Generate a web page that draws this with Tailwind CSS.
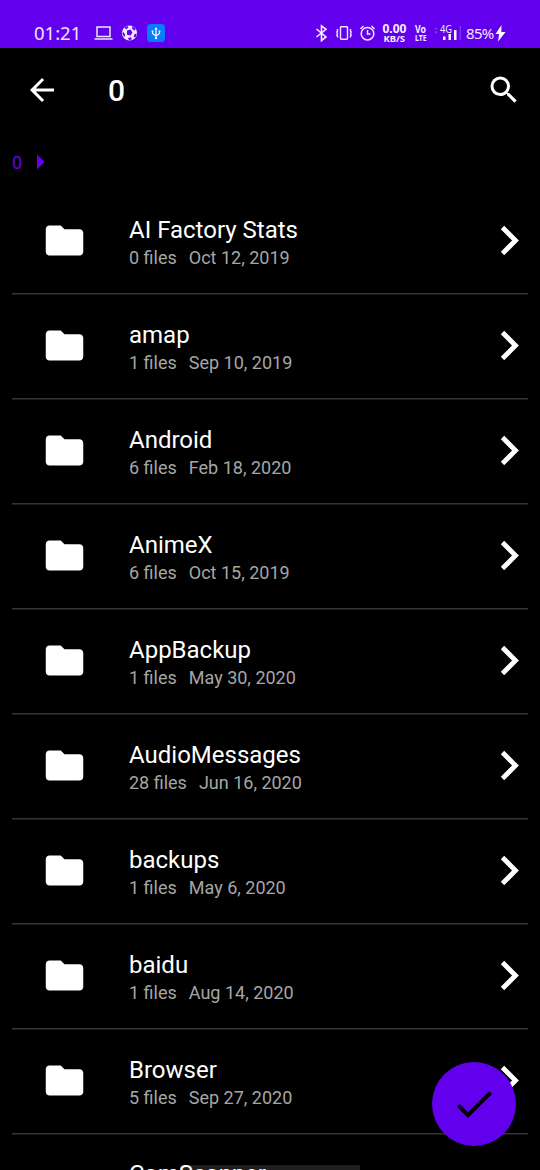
<!DOCTYPE html>
<html lang="en">
<head>
<meta charset="utf-8">
<title>Folder picker</title>
<script src="https://cdn.jsdelivr.net/npm/@tailwindcss/browser@4"></script>
</head>
<body class="bg-black">
<div class="relative flex h-[1170px] w-[540px] flex-col overflow-hidden bg-black font-['Roboto',sans-serif] text-white">
  <header class="flex h-12 shrink-0 items-start bg-[#6200ee] pt-[21px]">
    <div class="ml-[34px] w-[60px] font-['Noto_Sans',sans-serif] text-[18.500px] leading-6 text-white/90 whitespace-nowrap">01:21</div>
    <svg class="h-6 w-[19px]" viewBox="0 0 19 24" fill="none" stroke="#f0e6ff" stroke-width="1.5"><path d="M3 6h13v9.500H3zM.5 18h18"/></svg>
    <svg class="ml-2 h-6 w-[17px]" viewBox="0 0 17 24"><circle cx="8.500" cy="12" r="7.600" fill="#f4edff"/><path fill="#6200ee" d="M6 9.500l3.500-1 2 3-2 3-3.500-.800zM3.500 6.500l3-1.500 1 1.500-2.500 2zM11 5l3.500 2.700-.7 2-2.500-1.600zM1.200 12l1.600-.7 1.500 3-1.200 1.600zM7 17l3-.7 1 2-3 .9zM13.200 13.500l2.500-1.300-.8 3.500-2.200.700z"/></svg>
    <svg class="ml-[9px] h-6 w-[18px]" viewBox="0 0 18 24"><rect y="3" width="18" height="18" rx="3.500" fill="#087cff"/><path d="M9 8v9M5.500 10.500v2L9 15l3.500-2.500v-2" fill="none" stroke="#fff" stroke-width="1.200"/><path d="M9 6l1.500 2.500h-3zM4.700 9.500h1.600v1.600H4.700zM11.700 9.500h1.600v1.600h-1.600z" fill="#fff"/><circle cx="9" cy="17" r="1.200" fill="#fff"/></svg>
    <svg class="ml-[150px] h-6 w-[13px]" viewBox="0 0 13 24" fill="none" stroke="#f4edff" stroke-width="1.600"><path d="M1.500 8l9.500 8-4.500 3.500V4.800L11 8.300 1.500 16"/></svg>
    <svg class="ml-2 h-6 w-4" viewBox="0 0 16 24" fill="none" stroke="#f0e6ff" stroke-width="1.400"><rect x="4.500" y="5.700" width="7" height="12.600" rx=".7"/><path d="M1.500 8v2l-.7 1 .7 1.500-.7 1.500.7 1v1.500M14.500 8v2l.7 1-.7 1.500.7 1.500-.7 1v1.500"/></svg>
    <svg class="ml-2 h-6 w-4" viewBox="0 0 16 24" fill="none" stroke="#f0e6ff" stroke-width="1.500"><circle cx="7.500" cy="12.700" r="6.300"/><path d="M7.500 9v4h3M.5 8l3-3M14.500 8l-3-3"/></svg>
    <svg class="ml-[5px] h-6 w-[27px]" viewBox="0 0 27 24" fill="#f6f0ff" font-family="Noto Sans" font-weight="700"><text x="1.500" y="12" font-size="12" textLength="24" lengthAdjust="spacingAndGlyphs">0.00</text><text x="2.500" y="20.500" font-size="9.500" textLength="21.500" lengthAdjust="spacingAndGlyphs">KB/S</text></svg>
    <svg class="ml-[6px] h-6 w-[14px]" viewBox="0 0 14 24" fill="#f6f0ff" font-family="Noto Sans" font-weight="700"><text x="1" y="11.500" font-size="10" textLength="11" lengthAdjust="spacingAndGlyphs">Vo</text><text x="1" y="19.500" font-size="9.500" textLength="11.500" lengthAdjust="spacingAndGlyphs">LTE</text></svg>
    <svg class="ml-[6px] h-6 w-[30px]" viewBox="0 0 30 24"><path d="M0 8.500l2-2.500 2 2.500zM0 10.500l2 2.500 2-2.500z" fill="#8136f2"/><text x="6" y="11.700" fill="#f4edff" font-family="Noto Sans" font-size="10.500" textLength="12" lengthAdjust="spacingAndGlyphs">4G</text><path d="M9 15.500h2.500V19H9zM14.500 13H17v6h-2.500zM20 9h2.500v10H20z" fill="#fff"/><path d="M25.500 5H27v14h-1.500z" fill="#8133f2"/></svg>
    <div class="ml-[2px] w-[29px] whitespace-nowrap font-['Noto_Sans',sans-serif] text-[15px] leading-6 tracking-[-0.7px] text-[#f0e6ff]">85%</div>
    <svg class="h-6 w-[11px]" viewBox="0 0 11 24"><path d="M6.500 4L.5 13H4l-.8 7.500L10.500 11H6.300z" fill="#fff"/></svg>
  </header>

  <nav class="flex h-[84px] shrink-0 items-center">
    <svg class="ml-6 size-9" viewBox="0 0 24 24" fill="#fff"><path d="M20 11H7.830l5.590-5.590L12 4l-8 8 8 8 1.410-1.410L7.830 13H20z"/></svg>
    <h1 class="ml-12 mt-px text-[30px] leading-9 font-medium">0</h1>
    <svg class="ml-auto mr-[18px] size-9" viewBox="0 0 24 24" fill="#fff"><path d="M15.500 14h-.790l-.280-.270A6.470 6.470 0 0 0 16 9.500 6.500 6.500 0 1 0 9.500 16c1.610 0 3.090-.590 4.230-1.570l.270.280v.790l5 4.990L20.490 19zM9.500 14a4.500 4.500 0 1 1 0-9 4.500 4.500 0 0 1 0 9z"/></svg>
  </nav>

  <div class="flex h-[57px] shrink-0 items-start pl-3 pt-[19px] text-[18px] leading-6 text-[#6200ee]">
    <span>0</span>
    <svg class="ml-[15px] mt-[3px] h-4 w-2" viewBox="0 0 8 16"><path d="M0 .5l7.500 7.500L0 15.500z" fill="#6200ee"/></svg>
  </div>

  <main id="list" class="flex flex-col px-3"></main>

  <button aria-label="Confirm" class="absolute left-[432px] top-[1062px] flex size-[84px] items-center justify-center rounded-full bg-[#6200ee]">
    <svg class="size-12" viewBox="0 0 24 24"><path d="M9 16.170L4.830 12l-1.420 1.410L9 19 21 7l-1.410-1.410z" fill="#000"/></svg>
  </button>
  <div class="absolute bottom-0 left-[180px] h-[5px] w-[180px] bg-white/12"></div>
</div>
<script>
const folders = [
  ['AI Factory Stats', '0 files', 'Oct 12, 2019'],
  ['amap', '1 files', 'Sep 10, 2019'],
  ['Android', '6 files', 'Feb 18, 2020'],
  ['AnimeX', '6 files', 'Oct 15, 2019'],
  ['AppBackup', '1 files', 'May 30, 2020'],
  ['AudioMessages', '28 files', 'Jun 16, 2020'],
  ['backups', '1 files', 'May 6, 2020'],
  ['baidu', '1 files', 'Aug 14, 2020'],
  ['Browser', '5 files', 'Sep 27, 2020'],
  ['CamScanner', '', '']
];
document.getElementById('list').innerHTML = folders.map(([name, count, date]) => `
  <div class="group flex h-[105px] shrink-0 items-start border-b border-[#343434] shadow-[0_1px_0_#1c1c1c]">
    <svg class="ml-[30px] mt-[28.500px] size-[45px] shrink-0" viewBox="0 0 24 24" fill="#fff"><path d="M10 4H4c-1.100 0-1.990.900-1.990 2L2 18c0 1.100.900 2 2 2h16c1.100 0 2-.900 2-2V8c0-1.100-.900-2-2-2h-8z"/></svg>
    <div class="ml-[42px] grow pt-[27px] whitespace-nowrap group-last:pt-[26px]">
      <div class="text-[24px] leading-7">${name}</div>
      <div class="mt-[2px] flex gap-3 text-[18px] leading-6 text-[#a6a6a6]"><span>${count}</span><span>${date}</span></div>
    </div>
    <svg class="mr-[8px] mt-[36px] h-[30px] w-5 shrink-0" viewBox="0 0 20 30" fill="none" stroke="#fff" stroke-width="4.800"><path d="M2.500 2.500l13 13L2.500 28.500"/></svg>
  </div>`).join('');
</script>
</body>
</html>
